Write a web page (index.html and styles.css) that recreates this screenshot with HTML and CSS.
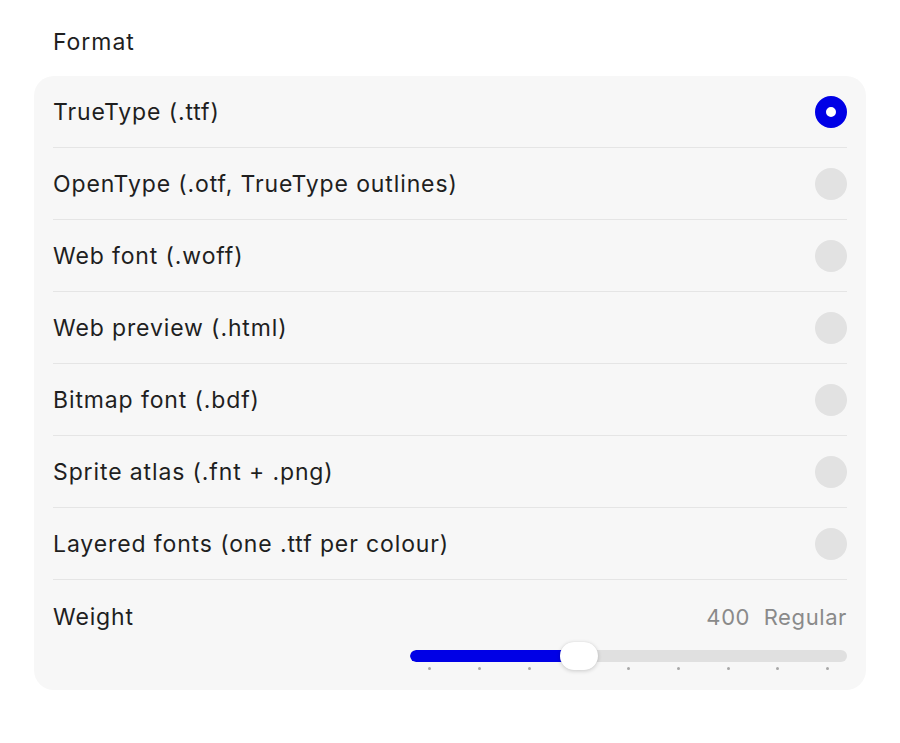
FILE: index.html
```html
<!DOCTYPE html>
<html>
<head>
<meta charset="utf-8">
<link rel="stylesheet" href="styles.css">
</head>
<body>
<div class="panel">
  <div class="section-label">Format</div>
  <div class="card">
    <div class="row"><span class="row-text">TrueType (.ttf)</span><span class="radio on"></span></div>
    <div class="row"><span class="row-text">OpenType (.otf, TrueType outlines)</span><span class="radio"></span></div>
    <div class="row"><span class="row-text">Web font (.woff)</span><span class="radio"></span></div>
    <div class="row"><span class="row-text">Web preview (.html)</span><span class="radio"></span></div>
    <div class="row"><span class="row-text">Bitmap font (.bdf)</span><span class="radio"></span></div>
    <div class="row"><span class="row-text">Sprite atlas (.fnt + .png)</span><span class="radio"></span></div>
    <div class="row"><span class="row-text">Layered fonts (one .ttf per colour)</span><span class="radio"></span></div>
    <div class="weight">
      <div class="weight-head">
        <span class="row-text">Weight</span>
        <span class="weight-value">400&nbsp;&nbsp;Regular</span>
      </div>
      <div class="slider-wrap">
        <div class="slider">
          <div class="track"><div class="fill" style="width:169px"></div></div>
          <div class="ticks">
            <span class="tick"></span><span class="tick"></span><span class="tick"></span><span class="tick current"></span><span class="tick"></span><span class="tick"></span><span class="tick"></span><span class="tick"></span><span class="tick"></span>
          </div>
          <div class="thumb" style="left:150px"></div>
        </div>
      </div>
    </div>
  </div>
</div>
</body>
</html>
```

FILE: styles.css
```css
html, body {
  margin: 0;
  padding: 0;
  background: #ffffff;
}
body {
  font-family: Inter, "Noto Sans", "Liberation Sans", sans-serif;
  color: #222222;
}
.panel {
  padding: 28px 34px 0 34px;
}
.section-label {
  font-size: 23px;
  letter-spacing: 0.95px;
  line-height: 28px;
  padding-left: 19px;
  margin-bottom: 20px;
  color: #1f1f1f;
}
.card {
  background: #f7f7f7;
  border-radius: 20px;
  padding: 0 19px;
}
.row {
  height: 71px;
  border-bottom: 1px solid #e5e5e5;
  display: flex;
  align-items: center;
  justify-content: space-between;
}
.row-text {
  font-size: 23px;
  letter-spacing: 0.88px;
  line-height: 28px;
  color: #1f1f1f;
}
.radio {
  width: 32px;
  height: 32px;
  border-radius: 50%;
  background: #e2e2e2;
  box-sizing: border-box;
}
.radio.on {
  background: #ffffff;
  border: 11px solid #0000e6;
}
.weight {
  height: 110px;
  padding-top: 23px;
  box-sizing: border-box;
}
.weight-head {
  display: flex;
  justify-content: space-between;
  align-items: center;
}
.weight-value {
  font-size: 22px;
  letter-spacing: 0.6px;
  line-height: 28px;
  color: #8a8a8a;
}
.slider-wrap {
  display: flex;
  justify-content: flex-end;
  margin-top: 19px;
}
.slider {
  position: relative;
  width: 437px;
  height: 26px;
}
.track {
  position: absolute;
  left: 0;
  right: 0;
  top: 0;
  height: 12px;
  border-radius: 6px;
  background: #e0e0e0;
  overflow: hidden;
}
.fill {
  height: 100%;
  background: #0000e6;
  border-radius: 6px 0 0 6px;
}
.thumb {
  position: absolute;
  top: -8px;
  width: 38px;
  height: 28px;
  border-radius: 14px;
  background: #ffffff;
  box-shadow: 0 1px 4px rgba(0,0,0,0.18), 0 0 1px rgba(0,0,0,0.1);
}
.ticks {
  position: absolute;
  left: 18px;
  right: 18px;
  top: 17px;
  display: flex;
  justify-content: space-between;
}
.tick {
  width: 3px;
  height: 3px;
  border-radius: 50%;
  background: #a8a8a8;
}
.tick.current {
  background: transparent;
}
```
